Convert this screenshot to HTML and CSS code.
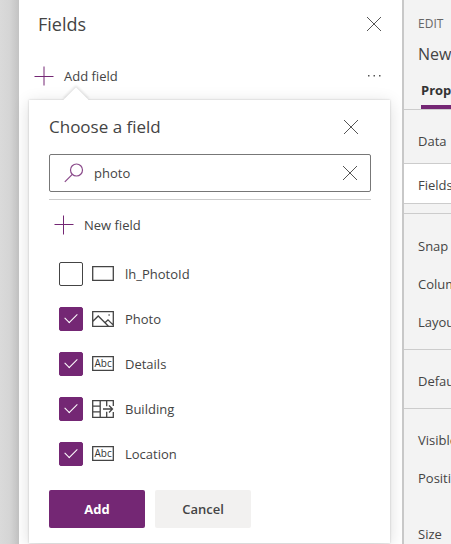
FILE: index.html
```html
<!DOCTYPE html>
<html lang="en">
<head>
<meta charset="utf-8">
<title>Fields</title>
<link rel="stylesheet" href="styles.css">
</head>
<body>
<div class="app">
  <div class="canvas"></div>
  <main class="panel">
    <header class="panel-head">
      <h1>Fields</h1>
      <button class="icon-button" aria-label="Close fields"><svg width="16" height="16" viewBox="0 0 16 16"><path d="M1 1l14 14M15 1L1 15"/></svg></button>
    </header>
    <div class="toolbar">
      <button class="command"><svg class="plus" width="20" height="20" viewBox="0 0 20 20"><path d="M10 .5v19M.5 10.500h19"/></svg>Add field</button>
      <button class="icon-button" aria-label="More"><svg class="dots" width="16" height="16" viewBox="0 0 16 16"><path d="M2 7h1.500v1.500H2zM7.500 7H9v1.500H7.500zM13 7h1.500v1.500H13z"/></svg></button>
    </div>
    <section class="callout">
      <header class="callout-head">
        <h2>Choose a field</h2>
        <button class="icon-button" aria-label="Close"><svg width="16" height="16" viewBox="0 0 16 16"><path d="M1 1l14 14M15 1L1 15"/></svg></button>
      </header>
      <div class="search">
        <svg class="lens" width="20" height="20" viewBox="0 0 20 20"><circle cx="12.500" cy="7" r="6"/><path d="M8.300 11.300L.8 18.800"/></svg>
        <input type="text" value="photo" aria-label="Search fields">
        <button class="icon-button" aria-label="Clear search"><svg width="16" height="16" viewBox="0 0 16 16"><path d="M1 1l14 14M15 1L1 15"/></svg></button>
      </div>
      <div class="new-row">
        <button class="command"><svg class="plus" width="20" height="20" viewBox="0 0 20 20"><path d="M9.500 .5v19M.5 9.500h19"/></svg>New field</button>
      </div>
      <div class="options">
        <label class="option"><input type="checkbox"><svg class="type" width="22" height="18" viewBox="0 0 22 18"><path d="M.7 1.700h20.600v13.600H.7z"/></svg>lh_PhotoId</label>
        <label class="option"><input type="checkbox" checked><svg class="type" width="22" height="18" viewBox="0 0 22 18"><path d="M.7 1.700h20.600v14.600H.7zM.7 11.500L6.200 6l10.300 10.300M13 12.800l3-3 5.300 5.300"/><path d="M16.500 5h1.200"/></svg>Photo</label>
        <label class="option"><input type="checkbox" checked><svg class="type" width="22" height="18" viewBox="0 0 22 18"><path d="M.7 1.700h20.600v13.600H.7z"/><text x="2.500" y="12">Abc</text></svg>Details</label>
        <label class="option"><input type="checkbox" checked><svg class="type" width="22" height="18" viewBox="0 0 22 18"><path d="M21.300 6V.7H.7v16.600h20.600V12M.7 6.200h7.500M.7 11.800h7.500M8.200 .7v16.600M14.700 .7v5.500M14.700 11.800v5.500M11 9h9M17 5.500L20.500 9 17 12.500"/></svg>Building</label>
        <label class="option"><input type="checkbox" checked><svg class="type" width="22" height="18" viewBox="0 0 22 18"><path d="M.7 1.700h20.600v13.600H.7z"/><text x="2.500" y="12">Abc</text></svg>Location</label>
      </div>
      <footer class="actions">
        <button class="button primary">Add</button>
        <button class="button">Cancel</button>
      </footer>
    </section>
  </main>
  <aside class="props">
    <header class="props-head">
      <div class="kind">EDIT</div>
      <div class="name">New</div>
      <button class="tab">Properties</button>
    </header>
    <div class="prop data">Data</div>
    <div class="prop fields">Fields</div>
    <div class="group layout">
      <div class="prop">Snap</div>
      <div class="prop">Columns</div>
      <div class="prop">Layout</div>
    </div>
    <div class="group"><div class="prop">Default</div></div>
    <div class="group last">
      <div class="prop">Visible</div>
      <div class="prop">Position</div>
      <div class="prop size">Size</div>
    </div>
  </aside>
</div>
</body>
</html>
```
FILE: styles.css
```css
* { box-sizing: border-box; }

body {
  margin: 0;
  overflow: hidden;
  font: 13px/20px "Open Sans", "Noto Sans", sans-serif;
  color: #444;
}

h1, h2 { margin: 0; font-weight: 400; }
h1 { font-size: 18px; line-height: 24px; }
h2 { font-size: 17px; line-height: 24px; }

button { font: inherit; color: inherit; cursor: pointer; }

.app {
  display: grid;
  grid-template-columns: 19px minmax(0, 1fr) 49px;
  min-height: 100vh;
}

.canvas { background: linear-gradient(90deg, #dadada, #d5d5d5 50%, #c3c3c3); }

.panel { position: relative; background: #fff; }

.panel-head, .toolbar, .callout-head {
  display: flex;
  align-items: center;
  justify-content: space-between;
}

.panel-head { padding: 12px 20px 0 19px; }
.toolbar { padding: 30px 20px 0 15px; }

.icon-button {
  display: flex;
  padding: 0;
  border: 0;
  background: none;
}

.icon-button svg { fill: none; stroke: #555; stroke-width: 1; }
.icon-button .dots { fill: #555; stroke: none; }

.command {
  display: flex;
  align-items: center;
  gap: 10px;
  padding: 0;
  border: 0;
  background: none;
}

.plus { fill: none; stroke: #742774; stroke-width: 1; }

.callout {
  position: absolute;
  top: 100px;
  left: 10px;
  right: 12px;
  padding: 15px 19px;
  background: #fff;
  box-shadow: 0 0 2px rgba(0, 0, 0, .2), 0 3px 16px rgba(0, 0, 0, .14);
}

.callout::before {
  content: "";
  position: absolute;
  top: -9px;
  left: 38px;
  width: 18px;
  height: 18px;
  background: #fff;
  transform: rotate(45deg);
  box-shadow: -1px -1px 3px rgba(0, 0, 0, .14);
  clip-path: polygon(-4px -4px, 22px -4px, -4px 22px);
}

.callout-head { padding: 0 12px 0 1px; }

.search {
  display: flex;
  align-items: center;
  gap: 10px;
  height: 38px;
  margin: 15px 0 7px 1px;
  padding: 0 12px 0 14px;
  border: 1px solid #777;
  border-radius: 2px;
}

.search input {
  flex: 1;
  min-width: 0;
  padding: 0;
  border: 0;
  outline: 0;
  background: none;
  font: inherit;
  color: inherit;
}

.lens { fill: none; stroke: #8a4a8a; stroke-width: 1.2; }

.new-row {
  margin-left: 1px;
  padding: 15px 5px;
  border-top: 1px solid #ccc;
}

.options { padding: 1px 0 0 11px; }

.option {
  display: flex;
  align-items: center;
  height: 45px;
}

.option input {
  appearance: none;
  width: 24px;
  height: 24px;
  margin: 0 9px 0 0;
  border: 1px solid #444;
  border-radius: 2px;
  background: #fff;
}

.option input:checked {
  display: grid;
  place-items: center;
  border-color: #742774;
  background: #742774;
}

.option input:checked::before {
  content: "";
  width: 11px;
  height: 6px;
  margin-bottom: 4px;
  border: solid #fff;
  border-width: 0 0 1px 1px;
  transform: rotate(-45deg);
}

.type { margin-right: 11px; fill: none; stroke: #444; stroke-width: 1.300; }
.type text { fill: #333; stroke: none; font-size: 10px; }

.actions {
  display: flex;
  gap: 10px;
  padding: 14px 0 0 1px;
}

.button {
  width: 96px;
  height: 38px;
  padding: 0;
  border: 0;
  border-radius: 2px;
  background: #f2f1f0;
  font-weight: 600;
}

.primary { background: #742774; color: #fff; font-weight: 700; }

.props {
  z-index: 1;
  overflow: hidden;
  white-space: nowrap;
  border-left: 2px solid #c8c8c8;
  background: #f3f3f3;
}

.props-head { padding: 14px 0 0 14px; border-bottom: 1px solid #ccc; }
.kind { font-size: 12px; color: #666; }
.name { padding: 8px 0; font-size: 16px; line-height: 24px; }

.tab {
  display: block;
  margin-left: 3px;
  padding: 6px 0 5px;
  border: 0;
  border-bottom: 4px solid #742774;
  background: none;
  font-weight: 700;
  color: #333;
}

.prop { padding-left: 14px; line-height: 38px; }
.data { padding-top: 12px; padding-bottom: 3px; border-bottom: 1px solid #ccc; }
.fields { padding-top: 4px; background: #fff; border-bottom: 1px solid #ccc; line-height: 35px; }
.group { padding: 12px 0 8px; border-bottom: 1px solid #ccc; }
.layout { margin-top: 9px; padding: 13px 0 8px; border-top: 1px solid #ccc; }
.last { border-bottom: 0; }
.size { margin-top: 18px; }
```
